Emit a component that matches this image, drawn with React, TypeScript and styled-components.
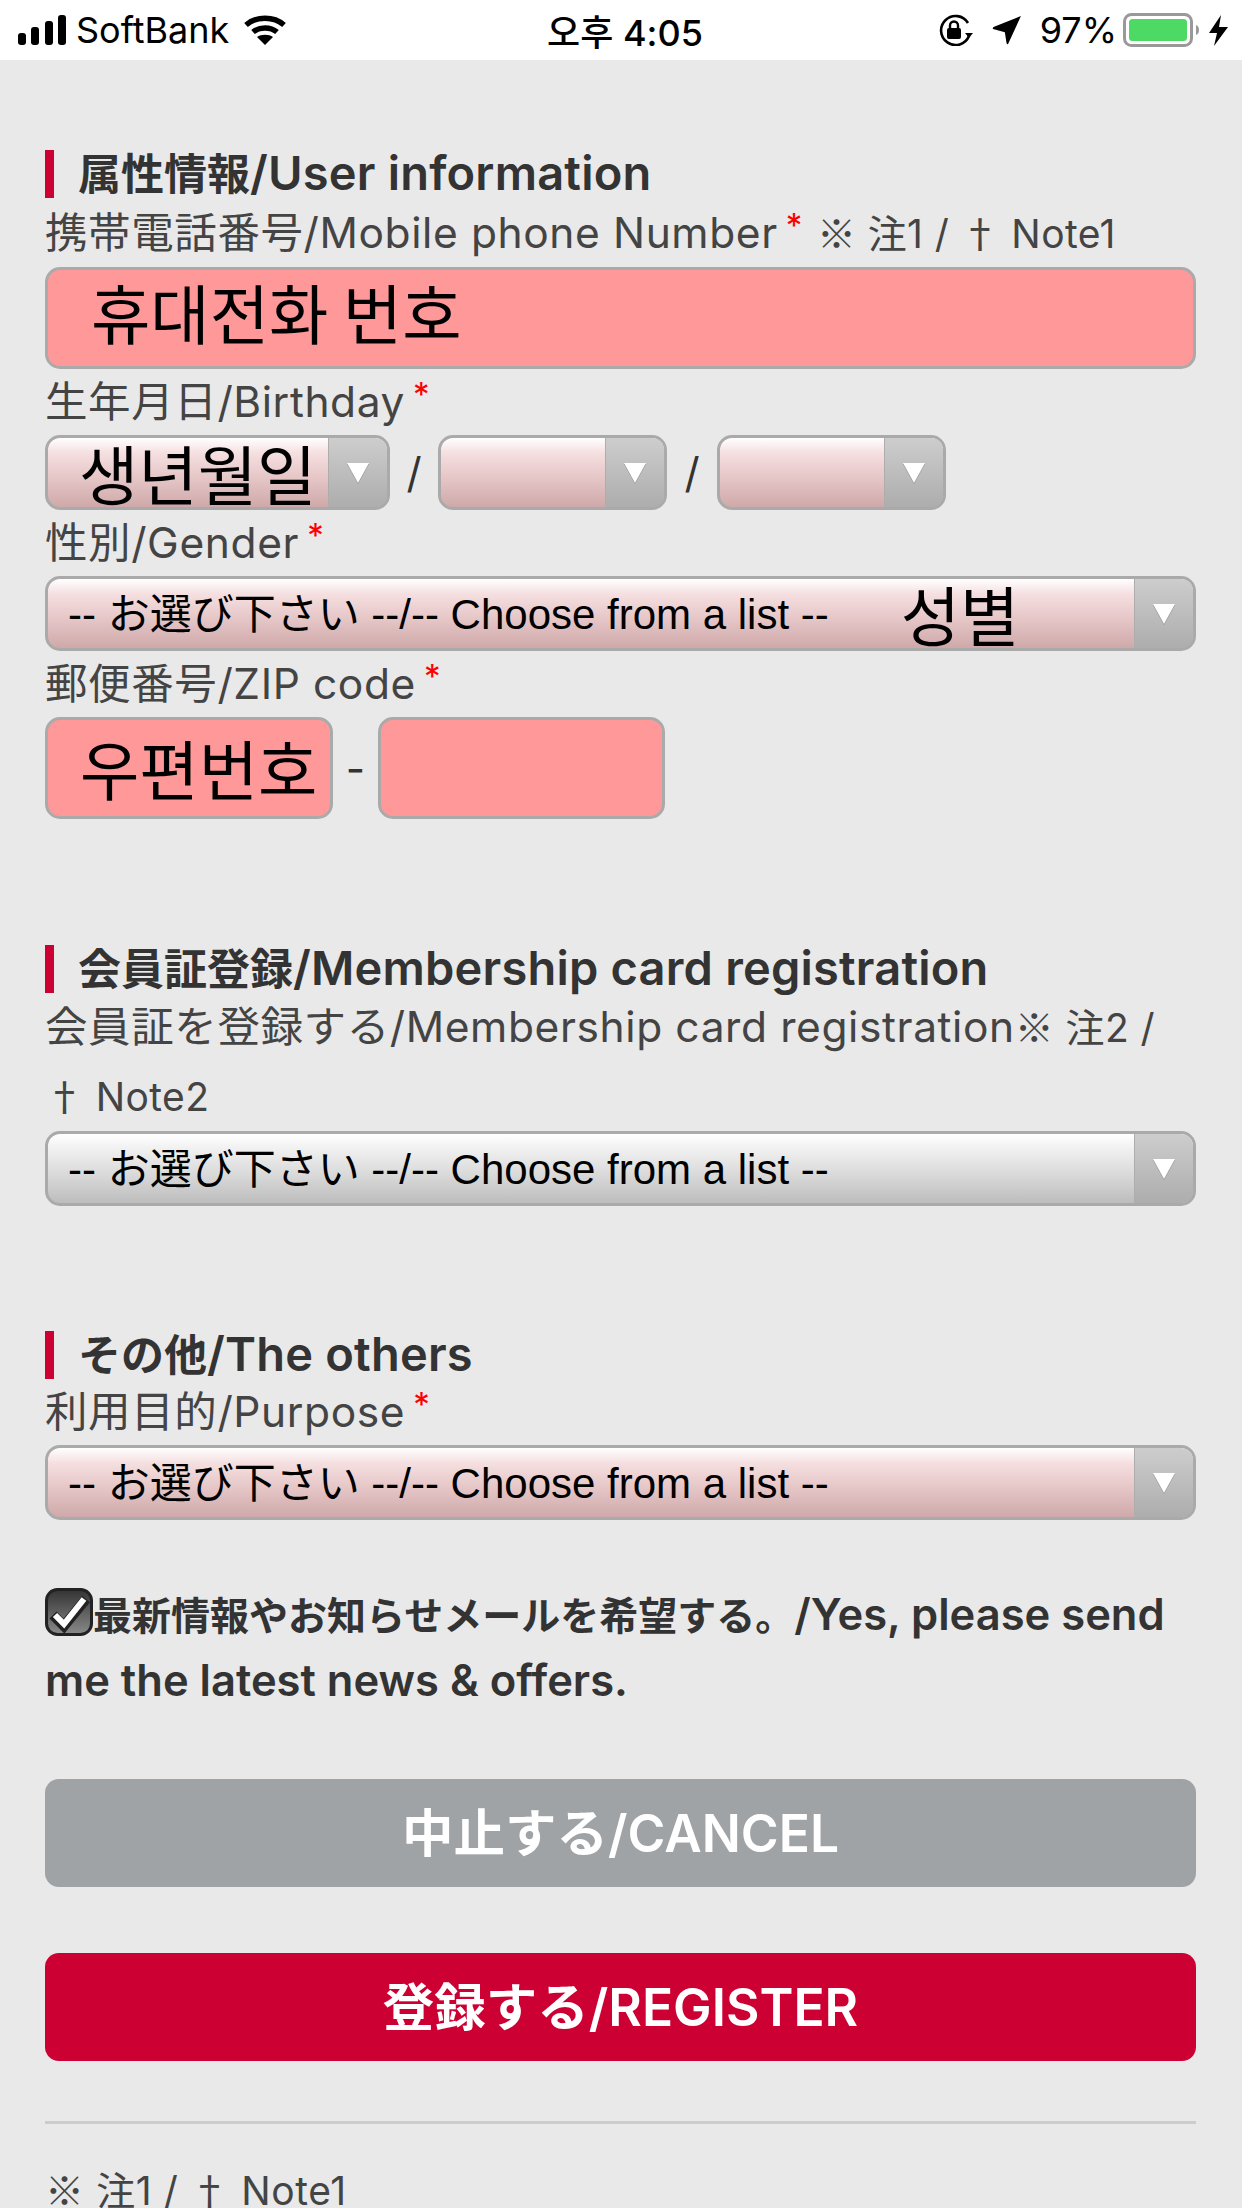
import React from "react";
import styled, { createGlobalStyle } from "styled-components";

const Global = createGlobalStyle`
  html, body { margin: 0; padding: 0; background: #e9e9e9; }
  body { width: 1242px; height: 2208px; overflow: hidden; font-family: "Inter", "Noto Sans CJK JP", sans-serif; }
`;

const Page = styled.div`
  width: 1242px;
  height: 2208px;
  overflow: hidden;
  background: #e9e9e9;
  color: #333;
`;

const StatusBar = styled.div`
  height: 60px;
  background: #fff;
  display: grid;
  grid-template-columns: 1fr auto 1fr;
  align-items: center;
  padding: 0 14px 0 18px;
  color: #000;
  font-size: 36px;
  font-family: "Inter", "Noto Sans CJK KR", sans-serif;
`;

const StatusGroup = styled.div<{ $end?: boolean }>`
  display: flex;
  align-items: center;
  justify-content: ${(p) => (p.$end ? "flex-end" : "flex-start")};
`;

const Carrier = styled.span`
  margin: 0 15px 0 10px;
`;

const Clock = styled.span`
  font-weight: 500;
  font-size: 36px;
  padding-left: 4px;
`;

const Percent = styled.span`
  margin: 0 6px 0 18px;
`;

const Main = styled.main`
  padding: 90px 46px 0 45px;
`;

const Section = styled.section<{ $gap?: number }>`
  margin-top: ${(p) => p.$gap ?? 0}px;
`;

const Heading = styled.h2`
  margin: 0;
  height: 48px;
  border-left: 9px solid #cc0033;
  padding-left: 24px;
  font-size: 43px;
  line-height: 48px;
  font-weight: 600;
  color: #333;
  white-space: nowrap;
`;

const HeadLatin = styled.span`
  font-size: 47px;
  font-weight: 600;
  line-height: 0;
  letter-spacing: 0.2px;
`;

const Label = styled.div<{ $h?: number }>`
  line-height: ${(p) => p.$h ?? 66}px;
  font-size: 42.5px;
  letter-spacing: 0.6px;
  color: #444;
  white-space: nowrap;
`;

const WrapLabel = styled(Label)`
  white-space: normal;
  line-height: 69px;
  margin-top: -1px;
  padding-bottom: 1px;
`;

const Req = styled.sup`
  color: #f00;
  font-size: 33px;
  line-height: 0;
  vertical-align: 11px;
  margin-left: 8px;
`;

const Note = styled.span<{ $flush?: boolean }>`
  font-size: 39px;
  line-height: 0;
  margin-left: ${(p) => (p.$flush ? 0 : 14)}px;
  letter-spacing: 0.4px;
`;

const Wide = styled.span`
  font-family: "Noto Sans CJK JP", sans-serif;
`;

const TextField = styled.div<{ $w?: number; $indent?: number }>`
  box-sizing: border-box;
  width: ${(p) => (p.$w ? `${p.$w}px` : "100%")};
  height: 102px;
  background: #ff9999;
  border: 3px solid #aaa;
  border-radius: 15px;
  padding-left: ${(p) => p.$indent ?? 0}px;
  display: flex;
  align-items: center;
`;

const Hangul = styled.span<{ $lift?: number }>`
  font-family: "Noto Sans CJK KR", sans-serif;
  font-size: 64.5px;
  line-height: 1;
  color: #000;
  white-space: nowrap;
  margin-bottom: ${(p) => p.$lift ?? 0}px;
`;

const Row = styled.div`
  display: flex;
  align-items: center;
`;

const Sep = styled.span<{ $w: number }>`
  width: ${(p) => p.$w}px;
  text-align: center;
  font-size: 42px;
  color: #333;
`;

const SelectBox = styled.div<{ $w?: number; $pink?: boolean }>`
  box-sizing: border-box;
  width: ${(p) => (p.$w ? `${p.$w}px` : "100%")};
  height: 75px;
  border: 3px solid #aaa;
  border-radius: 15px;
  overflow: hidden;
  display: flex;
  background: ${(p) =>
    p.$pink
      ? "linear-gradient(#fff 0%, #f5dfe0 22%, #e7c8c9 55%, #cfa9a9 100%)"
      : "linear-gradient(#fff 0%, #f0f0f0 22%, #dcdcdc 55%, #bdbdbd 100%)"};
`;

const SelectBody = styled.div<{ $indent: number }>`
  flex: 1;
  min-width: 0;
  padding-left: ${(p) => p.$indent}px;
  display: flex;
  align-items: center;
  white-space: nowrap;
`;

const SelectText = styled.span`
  font-family: "Liberation Sans", "Noto Sans CJK JP", sans-serif;
  font-size: 42px;
  color: #000;
  margin-bottom: 7px;
`;

const GenderHint = styled(Hangul)`
  margin-left: 72px;
`;

const ArrowCell = styled.div`
  width: 58px;
  flex: none;
  background: linear-gradient(#cdcdcd, #adadad);
  border-left: 1px solid #adadad;
  display: flex;
  align-items: center;
  justify-content: center;
`;

const Arrow = styled.span`
  width: 0;
  height: 0;
  border-left: 11px solid transparent;
  border-right: 11px solid transparent;
  border-top: 20px solid #fff;
  filter: drop-shadow(0 1px 0 #8a8a8a);
`;

const ConsentText = styled.p`
  margin: 61px 0 0;
  font-size: 43.5px;
  line-height: 66px;
  font-weight: 600;
  color: #333;
`;

const ConsentCjk = styled.span`
  font-size: 39px;
  line-height: 0;
  font-weight: 600;
`;

const CheckSvg = styled.svg`
  width: 48px;
  height: 48px;
  vertical-align: -6px;
`;

const Button = styled.div<{ $bg: string }>`
  box-sizing: border-box;
  height: 108px;
  margin-top: 66px;
  padding-bottom: 8px;
  border-radius: 14px;
  background: ${(p) => p.$bg};
  color: #fff;
  font-size: 51.5px;
  font-weight: 600;
  display: flex;
  align-items: center;
  justify-content: center;
`;

const Divider = styled.hr`
  margin: 60px 0 0;
  border: 0;
  border-top: 3px solid #ccc;
`;

const Foot = styled.div`
  margin-top: 31px;
  font-size: 39px;
  line-height: 66px;
  letter-spacing: 0.6px;
  color: #444;
`;

const Sel = ({ w, pink, indent = 20, children }: { w?: number; pink?: boolean; indent?: number; children?: React.ReactNode }) => (
  <SelectBox $w={w} $pink={pink}>
    <SelectBody $indent={indent}>{children}</SelectBody>
    <ArrowCell>
      <Arrow />
    </ArrowCell>
  </SelectBox>
);

const CHOOSE = "-- お選び下さい --/-- Choose from a list --";

export default function App() {
  return (
    <Page>
      <Global />
      <StatusBar>
        <StatusGroup>
          <svg width="48" height="30" viewBox="0 0 48 30">
            <rect x="0" y="18" width="8" height="12" rx="3" fill="#000" />
            <rect x="13" y="12" width="8" height="18" rx="3" fill="#000" />
            <rect x="27" y="6" width="8" height="24" rx="3" fill="#000" />
            <rect x="40" y="0" width="8" height="30" rx="3" fill="#000" />
          </svg>
          <Carrier>SoftBank</Carrier>
          <svg width="42" height="30" viewBox="0 0 42 30" fill="none" stroke="#000" strokeWidth="5.5">
            <path d="M2 10C12 1 30 1 40 10" />
            <path d="M9 17C15.500 11.500 26.500 11.500 33 17" />
            <path d="M21 30L13 22C17 19 25 19 29 22Z" fill="#000" stroke="none" />
          </svg>
        </StatusGroup>
        <Clock>오후 4:05</Clock>
        <StatusGroup $end>
          <svg width="36" height="32" viewBox="0 0 36 32" fill="none">
            <path d="M31 21A14.500 14.500 0 1 1 30 8" stroke="#000" strokeWidth="2.600" transform="translate(0 1)" />
            <path d="M27 19L35 19L31 24Z" fill="#000" />
            <rect x="9" y="14" width="14" height="11" rx="2" fill="#000" />
            <path d="M12 15V11.500A4 4 0 0 1 20 11.500V15" stroke="#000" strokeWidth="2.400" />
          </svg>
          <svg width="30" height="30" viewBox="0 0 28 28" style={{ marginLeft: 18 }}>
            <path d="M27 1L15 27Q14 28 13.500 26L12 16L1 13Q0 12 2 11Z" fill="#000" />
          </svg>
          <Percent>97%</Percent>
          <svg width="78" height="34" viewBox="0 0 78 34">
            <rect x="1.500" y="1.500" width="67" height="31" rx="7" fill="none" stroke="#999" strokeWidth="3" />
            <rect x="6" y="6" width="58" height="22" rx="3.500" fill="#4cd964" />
            <path d="M73 12Q76 13 76 17Q76 21 73 22Z" fill="#999" />
          </svg>
          <svg width="19" height="31" viewBox="0 0 19 31" style={{ marginLeft: 8 }}>
            <path d="M12 0L0 18H8L5 31L19 12H10Z" fill="#000" />
          </svg>
        </StatusGroup>
      </StatusBar>

      <Main>
        <Section>
          <Heading>
            属性情報<HeadLatin>/User information</HeadLatin>
          </Heading>
          <Label $h={69}>
            携帯電話番号/Mobile phone Number<Req>*</Req>
            <Note>
              <Wide>※</Wide> 注1 / <Wide>†</Wide> Note1
            </Note>
          </Label>
          <TextField $indent={43}>
            <Hangul $lift={14}>휴대전화 번호</Hangul>
          </TextField>
          <Label>
            生年月日/Birthday<Req>*</Req>
          </Label>
          <Row>
            <Sel w={345} pink indent={31}>
              <Hangul>생년월일</Hangul>
            </Sel>
            <Sep $w={48}>/</Sep>
            <Sel w={229} pink />
            <Sep $w={50}>/</Sep>
            <Sel w={229} pink />
          </Row>
          <Label>
            性別/Gender<Req>*</Req>
          </Label>
          <Sel pink>
            <SelectText>{CHOOSE}</SelectText>
            <GenderHint>성별</GenderHint>
          </Sel>
          <Label>
            郵便番号/ZIP code<Req>*</Req>
          </Label>
          <Row>
            <TextField $w={288} $indent={32}>
              <Hangul $lift={2}>우편번호</Hangul>
            </TextField>
            <Sep $w={45}>-</Sep>
            <TextField $w={287} />
          </Row>
        </Section>

        <Section $gap={126}>
          <Heading>
            会員証登録<HeadLatin>/Membership card registration</HeadLatin>
          </Heading>
          <WrapLabel>
            会員証を登録する/Membership card registration
            <Note $flush>
              <Wide>※</Wide> 注2 / <Wide>†</Wide> Note2
            </Note>
          </WrapLabel>
          <Sel>
            <SelectText>{CHOOSE}</SelectText>
          </Sel>
        </Section>

        <Section $gap={125}>
          <Heading>
            その他<HeadLatin>/The others</HeadLatin>
          </Heading>
          <Label>
            利用目的/Purpose<Req>*</Req>
          </Label>
          <Sel pink>
            <SelectText>{CHOOSE}</SelectText>
          </Sel>
        </Section>

        <ConsentText>
          <CheckSvg viewBox="0 0 48 48">
            <defs>
              <linearGradient id="cb" x1="0" y1="0" x2="0" y2="1">
                <stop offset="0" stopColor="#333" />
                <stop offset="1" stopColor="#8a8a8a" />
              </linearGradient>
            </defs>
            <rect x="1.500" y="1.500" width="45" height="45" rx="11" fill="url(#cb)" stroke="#222" strokeWidth="3" />
            <path d="M8 27L19 38L41 11" fill="none" stroke="#222" strokeWidth="10" />
            <path d="M10 27L19 36L39 11" fill="none" stroke="#fff" strokeWidth="6" />
          </CheckSvg>
          <ConsentCjk>最新情報やお知らせメールを希望する。</ConsentCjk>/Yes, please send me the latest news &amp; offers.
        </ConsentText>

        <Button $bg="#9fa3a6">中止する/CANCEL</Button>
        <Button $bg="#cc0033">登録する/REGISTER</Button>
        <Divider />
        <Foot>
          <Wide>※</Wide> 注1 / <Wide>†</Wide> Note1
        </Foot>
      </Main>
    </Page>
  );
}
